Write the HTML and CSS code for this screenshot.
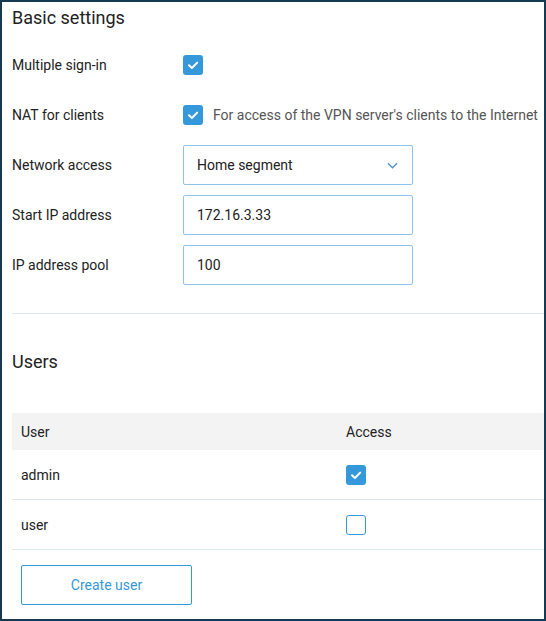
FILE: index.html
```html
<!DOCTYPE html>
<html>
<head>
<meta charset="utf-8">
<link rel="stylesheet" href="styles.css">
</head>
<body>
<div class="frame">
  <h2 class="title">Basic settings</h2>
  <div class="form">
    <div class="row">
      <div class="label">Multiple sign-in</div>
      <div class="control"><span class="cb checked"><svg viewBox="0 0 20 20"><path d="M6 10.3l2.9 2.7L14.2 7.6" /></svg></span></div>
    </div>
    <div class="row">
      <div class="label">NAT for clients</div>
      <div class="control"><span class="cb checked"><svg viewBox="0 0 20 20"><path d="M6 10.3l2.9 2.7L14.2 7.6" /></svg></span><span class="hint">For access of the VPN server's clients to the Internet</span></div>
    </div>
    <div class="row">
      <div class="label">Network access</div>
      <div class="control"><div class="field select"><span>Home segment</span><svg class="chev" viewBox="0 0 12 7"><path d="M1 1l5 5 5-5" /></svg></div></div>
    </div>
    <div class="row">
      <div class="label">Start IP address</div>
      <div class="control"><div class="field">172.16.3.33</div></div>
    </div>
    <div class="row">
      <div class="label">IP address pool</div>
      <div class="control"><div class="field">100</div></div>
    </div>
  </div>
  <hr class="divider">
  <h2 class="title users-title">Users</h2>
  <div class="table">
    <div class="tr head"><div class="td c1">User</div><div class="td">Access</div></div>
    <div class="tr"><div class="td c1">admin</div><div class="td"><span class="cb checked"><svg viewBox="0 0 20 20"><path d="M6 10.3l2.9 2.7L14.2 7.6" /></svg></span></div></div>
    <div class="tr"><div class="td c1">user</div><div class="td"><span class="cb"></span></div></div>
  </div>
  <button class="btn">Create user</button>
</div>
</body>
</html>
```
FILE: styles.css
```css
* { box-sizing: border-box; }
html, body { margin: 0; padding: 0; background: #fff; }
body { font-family: Roboto, "Liberation Sans", sans-serif; color: #222; font-size: 14px; }
.frame {
  width: 546px;
  height: 621px;
  border: 2px solid #173a54;
  padding: 4px 0 0 10px;
  overflow: hidden;
}
.title {
  margin: 0;
  font-size: 18px;
  font-weight: 400;
  line-height: 24px;
  color: #222;
}
.form {
  margin-top: 15px;
  display: flex;
  flex-direction: column;
  gap: 10px;
}
.row {
  display: flex;
  align-items: center;
  height: 40px;
}
.label { width: 171px; flex: none; }
.control { display: flex; align-items: center; }
.cb {
  width: 20px;
  height: 20px;
  border-radius: 3px;
  border: 1px solid #3a98da;
  background: #fff;
  display: inline-flex;
  flex: none;
}
.cb.checked { background: #3598db; border: 0; }
.cb svg { width: 20px; height: 20px; }
.cb svg path { fill: none; stroke: #fff; stroke-width: 2; stroke-linecap: round; stroke-linejoin: round; }
.hint { margin-left: 10px; color: #555; }
.field {
  width: 230px;
  height: 40px;
  border: 1px solid #8cc3ea;
  border-radius: 2px;
  display: flex;
  align-items: center;
  padding: 0 13px;
  color: #222;
}
.select { justify-content: space-between; }
.chev { width: 11px; height: 7px; margin-right: 1px; }
.chev path { fill: none; stroke: #4a8fd0; stroke-width: 1.3; }
.divider {
  margin: 28px 0 0 0;
  border: 0;
  border-top: 1px solid #dde7ee;
  height: 0;
}
.users-title { margin-top: 36px; }
.table { margin-top: 39px; }
.tr {
  display: flex;
  align-items: center;
  height: 50px;
  border-bottom: 1px solid #dce6ed;
}
.tr.head { height: 37px; background: #f3f3f3; border-bottom: 0; }
.td { padding-left: 9px; display: flex; align-items: center; }
.c1 { width: 325px; }
.btn {
  margin: 15px 0 0 9px;
  width: 171px;
  height: 40px;
  border: 1px solid #3598db;
  border-radius: 2px;
  background: #fff;
  color: #3598db;
  font-family: Roboto, "Liberation Sans", sans-serif;
  font-size: 14px;
  padding: 0;
}
```
